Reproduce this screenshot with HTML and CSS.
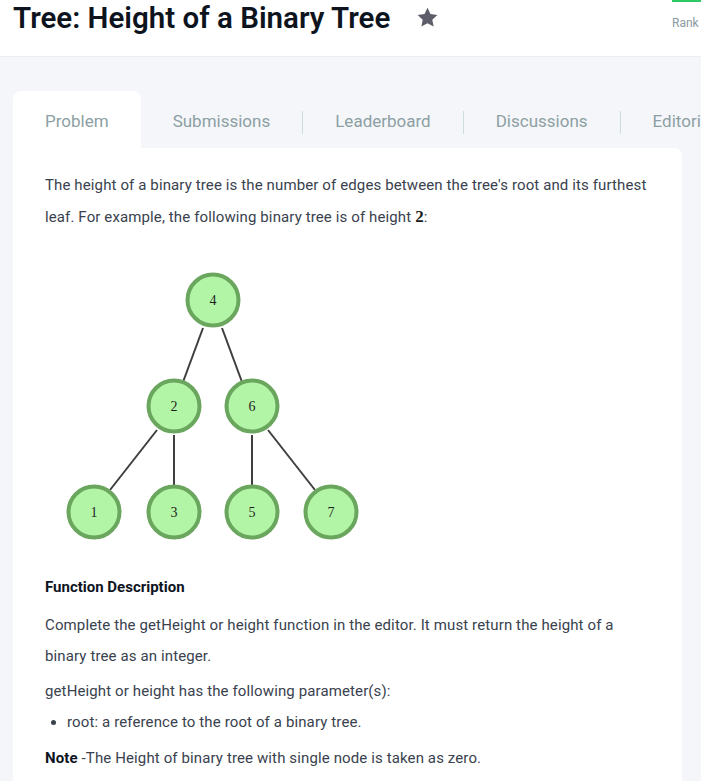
FILE: index.html
```html
<!DOCTYPE html>
<html>
<head>
<meta charset="utf-8">
<link rel="stylesheet" href="styles.css">
</head>
<body>
<header class="header">
  <div class="title-wrap">
    <h1 class="title">Tree: Height of a Binary Tree</h1>
    <svg class="star" width="23" height="23" viewBox="0 0 24 24"><path d="M12 1.8l3.1 6.6 7.2.9-5.3 5 1.4 7.1L12 17.9l-6.4 3.5 1.4-7.1-5.3-5 7.2-.9z" fill="#5d5d69"/></svg>
  </div>
  <div class="rank">
    <div class="rank-bar"></div>
    <span class="rank-label">Rank</span>
  </div>
</header>
<main class="main">
  <nav class="tabs">
    <div class="tab active">Problem</div>
    <div class="tab">Submissions</div>
    <span class="sep"></span>
    <div class="tab">Leaderboard</div>
    <span class="sep"></span>
    <div class="tab">Discussions</div>
    <span class="sep"></span>
    <div class="tab">Editorial</div>
  </nav>
  <section class="card">
    <p class="para">The height of a binary tree is the number of edges between the tree's root and its furthest leaf. For example, the following binary tree is of height <b class="math">2</b>:</p>
    <svg class="tree" width="330" height="290" viewBox="0 0 330 290">
      <g stroke="#3f3f3f" stroke-width="2">
        <line x1="158" y1="68" x2="138" y2="122"/>
        <line x1="177" y1="68" x2="197" y2="122"/>
        <line x1="112" y1="170" x2="65" y2="230"/>
        <line x1="129" y1="175" x2="129" y2="225"/>
        <line x1="207" y1="175" x2="207" y2="225"/>
        <line x1="223" y1="170" x2="270" y2="230"/>
      </g>
      <g fill="#b3f5a6" stroke="#6aa65e" stroke-width="4">
        <circle cx="168" cy="40" r="25.5"/>
        <circle cx="129" cy="146" r="25.5"/>
        <circle cx="207" cy="146" r="25.5"/>
        <circle cx="49" cy="252" r="25.5"/>
        <circle cx="129" cy="252" r="25.5"/>
        <circle cx="207" cy="252" r="25.5"/>
        <circle cx="286" cy="252" r="25.5"/>
      </g>
      <g class="node-label" text-anchor="middle">
        <text x="168" y="45">4</text>
        <text x="129" y="151">2</text>
        <text x="207" y="151">6</text>
        <text x="49" y="257">1</text>
        <text x="129" y="257">3</text>
        <text x="207" y="257">5</text>
        <text x="286" y="257">7</text>
      </g>
    </svg>
    <h3 class="subhead">Function Description</h3>
    <p class="para">Complete the getHeight or height function in the editor. It must return the height of a binary tree as an integer.</p>
    <p class="para tight">getHeight or height has the following parameter(s):</p>
    <ul class="list">
      <li>root: a reference to the root of a binary tree.</li>
    </ul>
    <p class="para"><strong class="strong">Note</strong> -The Height of binary tree with single node is taken as zero.</p>
  </section>
</main>
</body>
</html>
```
FILE: styles.css
```css
html, body {
  margin: 0;
  padding: 0;
}
body {
  width: 701px;
  height: 781px;
  overflow: hidden;
  background: #f5f6fa;
  font-family: Roboto, "Liberation Sans", sans-serif;
}
.header {
  height: 57px;
  background: #ffffff;
  display: flex;
  justify-content: space-between;
  align-items: flex-start;
  border-bottom: 1px solid #eceef3;
  box-sizing: border-box;
}
.title-wrap {
  display: flex;
  align-items: center;
  padding-left: 13px;
  padding-top: 0;
}
.title {
  margin: 0;
  font-size: 29.5px;
  font-weight: 600;
  color: #0e141e;
  letter-spacing: 0;
  line-height: 36px;
}
.star {
  margin-left: 26px;
  margin-top: -2px;
}
.rank {
  width: 29px;
  overflow: hidden;
  display: flex;
  flex-direction: column;
}
.rank-bar {
  height: 2px;
  background: #2ec866;
  width: 40px;
}
.rank-label {
  margin-top: 14px;
  font-size: 12px;
  color: #8a9aa0;
  white-space: nowrap;
}
.main {
  padding: 34px 0 0 13px;
}
.tabs {
  display: flex;
  align-items: center;
  height: 57px;
  white-space: nowrap;
}
.tab {
  height: 57px;
  line-height: 61px;
  padding: 0 32px;
  font-size: 17px;
  color: #8c9fa3;
  box-sizing: border-box;
}
.tab.active {
  background: #ffffff;
  border-radius: 8px 8px 0 0;
}
.sep {
  width: 1px;
  height: 23px;
  background: #cfdcdf;
  margin-top: 6px;
  flex: none;
}
.card {
  width: 669px;
  background: #ffffff;
  border-radius: 0 8px 0 0;
  padding: 22px 0 40px 32px;
  box-sizing: border-box;
  height: 700px;
}
.para {
  margin: 0 0 4px;
  width: 606px;
  font-size: 15px;
  letter-spacing: 0.12px;
  line-height: 31px;
  color: #39424e;
}
.para.tight {
  margin-bottom: 0;
}
.math {
  font-family: "Liberation Serif", serif;
  font-size: 17px;
  font-weight: 700;
  color: #1a1a1a;
}
.tree {
  display: block;
  margin: 27px 0 0 0;
}
.node-label {
  font-family: "Liberation Serif", serif;
  font-size: 14px;
  fill: #1f1f1f;
}
.subhead {
  margin: 27px 0 13px;
  font-size: 15px;
  font-weight: 700;
  color: #0e141e;
  line-height: 20px;
}
.list {
  margin: 0 0 5px;
  padding-left: 22px;
  font-size: 15px;
  letter-spacing: 0.12px;
  line-height: 31px;
  color: #39424e;
}
.strong {
  font-weight: 700;
  color: #0e141e;
}
```
